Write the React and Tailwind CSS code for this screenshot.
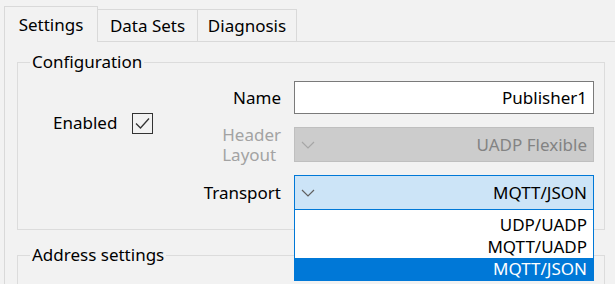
import React from "react";

function Chevron({ color }) {
  return (
    <svg width="14" height="8" viewBox="0 0 14 8" className="shrink-0">
      <polyline points="1,1 7,7 13,1" fill="none" stroke={color} strokeWidth="1.2" />
    </svg>
  );
}

function Checkbox() {
  return (
    <div className="w-[21px] h-[21px] border border-[#333333] bg-[#f2f2f2] flex items-center justify-center">
      <svg width="19" height="19" viewBox="0 0 19 19">
        <polyline points="3,9.5 7.5,14 16,4.5" fill="none" stroke="#333333" strokeWidth="1.3" />
      </svg>
    </div>
  );
}

function GroupBox({ title, className, children }) {
  return (
    <div className={"relative border border-[#dcdcdc] " + className}>
      <span className="absolute -top-[12px] left-[12px] px-[2px] bg-[#f2f2f2] leading-[22px]">{title}</span>
      {children}
    </div>
  );
}

export default function App() {
  return (
    <div className="w-[615px] h-[284px] overflow-hidden bg-[#f2f2f2] text-black text-[17px] leading-[22px] font-['Noto_Sans',sans-serif]">
      {/* Tabs */}
      <div className="relative z-10 flex items-end h-[41px] pl-[4px]">
        <div className="w-[94px] h-[36px] -mb-[1px] border border-b-0 border-[#d9d9d9] bg-[#f2f2f2] flex items-center justify-center">
          Settings
        </div>
        <div className="w-[100px] h-[32px] border border-l-0 border-b-0 border-[#d9d9d9] flex items-center justify-center">
          Data Sets
        </div>
        <div className="w-[99px] h-[32px] border border-l-0 border-b-0 border-[#d9d9d9] flex items-center justify-center">
          Diagnosis
        </div>
      </div>

      {/* Tab page */}
      <div className="ml-[4px] h-[243px] border-l border-t border-[#d9d9d9] pl-[12px] pr-[10px] pt-[20px]">
        <GroupBox title="Configuration" className="h-[168px]">
          <div className="flex pt-[18px] pr-[10px] pl-[35px]">
            <div className="flex items-center gap-[15px] mt-[31px] h-[22px] self-start">
              <span>Enabled</span>
              <Checkbox />
            </div>

            <div className="ml-auto grid grid-cols-[auto_300px] grid-rows-[33px_35px_35px] gap-x-[13px] gap-y-[13px] items-center">
              <span className="justify-self-end">Name</span>
              <div className="h-[33px] border border-[#7a7a7a] bg-white flex items-center justify-end pr-[6px]">
                Publisher1
              </div>

              <div className="justify-self-end flex flex-col text-[#a3a3a3] -my-[3px]">
                <span className="h-[20px] leading-[20px]">Header</span>
                <span className="h-[20px] leading-[20px]">Layout</span>
              </div>
              <div className="h-[35px] border border-[#bfbfbf] bg-[#cccccc] flex items-center justify-between pl-[6px] pr-[6px] text-[#838383]">
                <Chevron color="#a6a6a6" />
                <span>UADP Flexible</span>
              </div>

              <span className="justify-self-end">Transport</span>
              <div className="relative">
                <div className="h-[35px] border border-[#0078d7] bg-[#cce4f7] flex items-center justify-between pl-[6px] pr-[6px]">
                  <Chevron color="#606060" />
                  <span>MQTT/JSON</span>
                </div>
                {/* open drop-down list */}
                <div className="absolute z-20 top-full left-0 w-full border border-t-0 border-[#0078d7] bg-white pt-[4px]">
                  <div className="h-[22px] text-right pr-[6px]">UDP/UADP</div>
                  <div className="h-[22px] text-right pr-[6px]">MQTT/UADP</div>
                  <div className="h-[22px] text-right pr-[6px] bg-[#0078d7] text-white">MQTT/JSON</div>
                </div>
              </div>
            </div>
          </div>
        </GroupBox>

        <GroupBox title="Address settings" className="mt-[25px] h-[80px]" />
      </div>
    </div>
  );
}
